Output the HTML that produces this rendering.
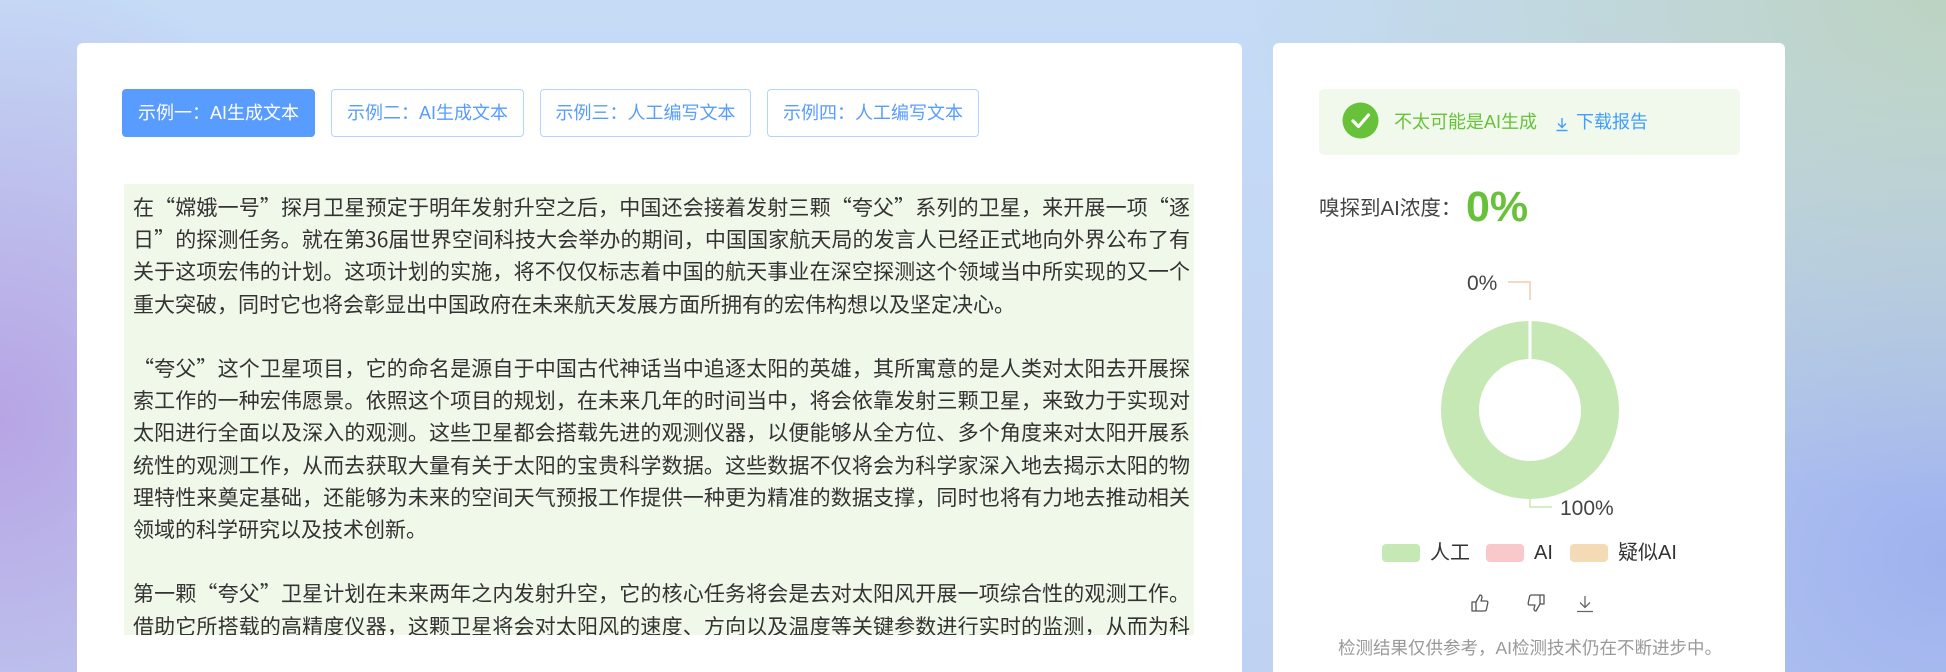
<!DOCTYPE html>
<html style="width:1946px;height:672px;overflow:hidden;background:#c3d6f4"><head><meta charset="utf-8"><style>
*{margin:0;padding:0;box-sizing:border-box}
body{width:1946px;height:672px;overflow:hidden;position:relative;font-family:"Liberation Sans","Noto Sans CJK SC",sans-serif;
background:
radial-gradient(ellipse 700px 500px at 1946px 0px,#bcd3c2 0%,rgba(188,211,194,0) 100%),
radial-gradient(ellipse 600px 500px at 1946px 560px,#9fb2ee 0%,rgba(159,178,238,0) 100%),
radial-gradient(ellipse 400px 450px at 0px 420px,#b7a4e4 0%,rgba(183,164,228,0) 100%),
linear-gradient(180deg,#c5dbf6 0%,#c0d2f2 100%);}
.card{position:absolute;background:#fff;border-radius:6px 6px 0 0}
.btn{position:absolute;top:89px;height:48px;border:1px solid #b3d4ff;border-radius:4px;color:#589cff;font-size:18px;line-height:46px;text-align:center;background:#fff;font-family:"Liberation Sans","Noto Sans CJK SC",sans-serif}
.btn.on{background:#589cff;border-color:#589cff;color:#fff}
.txt{position:absolute;left:124px;top:184px;width:1070px;height:451px;background:#f0f8ea;overflow:hidden;padding:7px 4px 0 9px;color:#333;font-size:21px;line-height:32.2px;text-align:justify;font-family:"Noto Sans CJK SC",sans-serif}
.txt p{margin-bottom:32.2px}
</style></head><body>
<div class="card" style="left:77px;top:43px;width:1165px;height:629px"></div>
<div class="btn on" style="left:122px;width:193px">示例一：AI生成文本</div>
<div class="btn" style="left:331px;width:193px">示例二：AI生成文本</div>
<div class="btn" style="left:540px;width:211px">示例三：人工编写文本</div>
<div class="btn" style="left:767px;width:212px">示例四：人工编写文本</div>
<div class="txt">
<p>在“嫦娥一号”探月卫星预定于明年发射升空之后，中国还会接着发射三颗“夸父”系列的卫星，来开展一项“逐日”的探测任务。就在第36届世界空间科技大会举办的期间，中国国家航天局的发言人已经正式地向外界公布了有关于这项宏伟的计划。这项计划的实施，将不仅仅标志着中国的航天事业在深空探测这个领域当中所实现的又一个重大突破，同时它也将会彰显出中国政府在未来航天发展方面所拥有的宏伟构想以及坚定决心。</p>
<p>“夸父”这个卫星项目，它的命名是源自于中国古代神话当中追逐太阳的英雄，其所寓意的是人类对太阳去开展探索工作的一种宏伟愿景。依照这个项目的规划，在未来几年的时间当中，将会依靠发射三颗卫星，来致力于实现对太阳进行全面以及深入的观测。这些卫星都会搭载先进的观测仪器，以便能够从全方位、多个角度来对太阳开展系统性的观测工作，从而去获取大量有关于太阳的宝贵科学数据。这些数据不仅将会为科学家深入地去揭示太阳的物理特性来奠定基础，还能够为未来的空间天气预报工作提供一种更为精准的数据支撑，同时也将有力地去推动相关领域的科学研究以及技术创新。</p>
<p>第一颗“夸父”卫星计划在未来两年之内发射升空，它的核心任务将会是去对太阳风开展一项综合性的观测工作。借助它所搭载的高精度仪器，这颗卫星将会对太阳风的速度、方向以及温度等关键参数进行实时的监测，从而为科学研究提供数据。</p>
</div>

<div class="card" style="left:1273px;top:43px;width:512px;height:629px"></div>
<div style="position:absolute;left:1319px;top:89px;width:421px;height:66px;background:#f0f9eb;border-radius:5px"></div>
<svg style="position:absolute;left:1342px;top:102px" width="37" height="37" viewBox="0 0 37 37"><circle cx="18.5" cy="18.5" r="18" fill="#67c23a"/><path d="M11 19l5.5 5.5L26.5 13" stroke="#fff" stroke-width="3.2" fill="none" stroke-linecap="round" stroke-linejoin="round"/></svg>
<div style="position:absolute;left:1394px;top:110px;font-size:18px;color:#67c23a;line-height:25px">不太可能是AI生成</div>
<svg style="position:absolute;left:1554px;top:116px" width="16" height="16" viewBox="0 0 16 16"><path d="M8 2v9M4 7.5l4 4 4-4M2.5 14.5h11" stroke="#409eff" stroke-width="1.4" fill="none"/></svg>
<div style="position:absolute;left:1576px;top:110px;font-size:18px;color:#409eff;line-height:25px">下载报告</div>
<div style="position:absolute;left:1319px;top:194px;font-size:20.5px;color:#444;line-height:29px">嗅探到AI浓度：</div>
<div style="position:absolute;left:1466px;top:182px;font-size:43px;font-weight:bold;color:#67c23a;line-height:50px">0%</div>

<svg style="position:absolute;left:1400px;top:260px" width="260" height="270" viewBox="0 0 260 270">
<circle cx="130" cy="150" r="70" fill="none" stroke="#c6e8b5" stroke-width="38"/>
<line x1="130" y1="100" x2="130" y2="59" stroke="#fff" stroke-width="3"/>
<path d="M108 22H130V40" stroke="#f7c9b0" stroke-width="1.5" fill="none"/>
<path d="M130 235V247H152" stroke="#c6e8b5" stroke-width="1.5" fill="none"/>
<text x="67" y="30" font-size="21" fill="#444" font-family="Liberation Sans,sans-serif">0%</text>
<text x="160" y="255" font-size="21" fill="#444" font-family="Liberation Sans,sans-serif">100%</text>
</svg>

<div style="position:absolute;left:1382px;top:544px;width:38px;height:18px;background:#c6e8b5;border-radius:4px"></div>
<div style="position:absolute;left:1430px;top:540px;font-size:20px;color:#333;line-height:26px">人工</div>
<div style="position:absolute;left:1486px;top:544px;width:38px;height:18px;background:#f8c8ca;border-radius:4px"></div>
<div style="position:absolute;left:1534px;top:540px;font-size:20px;color:#333;line-height:26px">AI</div>
<div style="position:absolute;left:1570px;top:544px;width:38px;height:18px;background:#f4dbb5;border-radius:4px"></div>
<div style="position:absolute;left:1618px;top:540px;font-size:20px;color:#333;line-height:26px">疑似AI</div>

<svg style="position:absolute;left:1470px;top:593px" width="20" height="20" viewBox="0 0 20 20"><path d="M2 9h4v9H2zM6 9l4-7c1.5 0 2 1 2 2.5L11 8h5.5c1 0 1.5 1 1.3 2l-1.4 6.5c-.2 1-1 1.5-2 1.5H6" stroke="#555" stroke-width="1.3" fill="none" stroke-linejoin="round"/></svg>
<svg style="position:absolute;left:1526px;top:593px" width="20" height="20" viewBox="0 0 20 20"><path d="M18 11h-4V2h4zM14 11l-4 7c-1.5 0-2-1-2-2.5L9 12H3.5c-1 0-1.5-1-1.3-2l1.4-6.5C3.8 2.5 4.6 2 5.6 2H14" stroke="#555" stroke-width="1.3" fill="none" stroke-linejoin="round"/></svg>
<svg style="position:absolute;left:1575px;top:593px" width="20" height="20" viewBox="0 0 20 20"><path d="M10 3v11M5 9.5l5 5 5-5M2 18.5h16" stroke="#666" stroke-width="1.3" fill="none"/></svg>
<div style="position:absolute;left:1280px;top:636px;width:500px;text-align:center;font-size:17.5px;color:#999;line-height:24px">检测结果仅供参考，AI检测技术仍在不断进步中。</div>
</body></html>
